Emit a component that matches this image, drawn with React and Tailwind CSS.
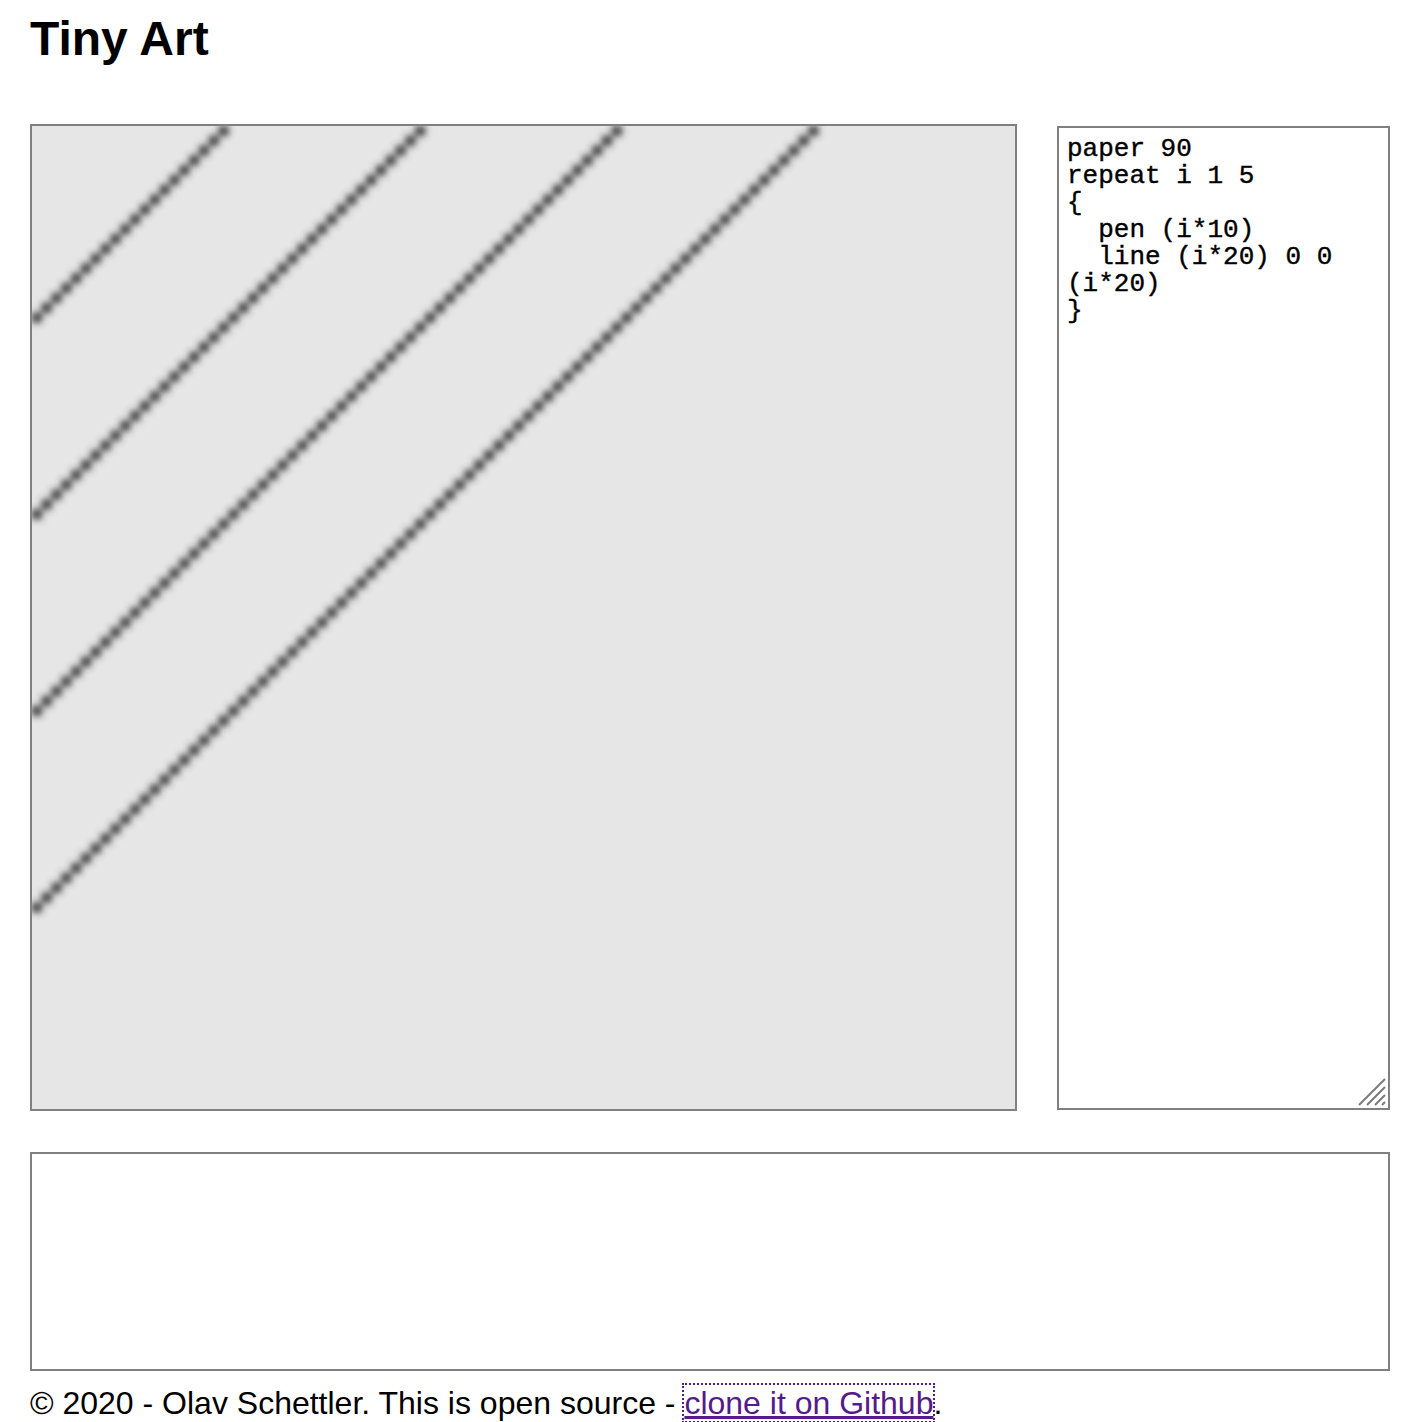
import React from "react";

function Art() {
  const lines = [1, 2, 3, 4];
  return (
    <svg viewBox="0 0 100 100" className="block w-full h-full" preserveAspectRatio="none">
      <defs>
        <filter id="blur" x="-10%" y="-10%" width="120%" height="120%">
          <feGaussianBlur stdDeviation="0.36" />
        </filter>
      </defs>
      <rect x="0" y="0" width="100" height="100" fill="#e6e6e6" />
      <g filter="url(#blur)" fill="#333333">
        {lines.map((i) => {
          const n = i * 20;
          const rects = [];
          for (let k = 0; k < n; k++) {
            rects.push(<rect key={k} x={k} y={n - 1 - k} width="1" height="1" />);
          }
          return <g key={i}>{rects}</g>;
        })}
      </g>
    </svg>
  );
}

export default function App() {
  const code = ["paper 90", "repeat i 1 5", "{", "  pen (i*10)", "  line (i*20) 0 0 ", "(i*20)", "}"];
  return (
    <div className="bg-white text-black pl-[30px] pr-[32px]" style={{ fontFamily: '"Liberation Sans", Arial, sans-serif' }}>
      <h1 className="text-[48px] font-bold leading-[55px] pt-[11px] m-0">Tiny Art</h1>
      <div className="flex items-start gap-[40px] mt-[58px]">
        <div className="w-[987px] h-[987px] border-2 border-[#808080] bg-[#e6e6e6] shrink-0">
          <Art />
        </div>
        <div className="relative mt-[2px] w-[333px] h-[984px] border-2 border-[#808080] bg-white pl-[8px] pt-[8px]">
          <div
            className="whitespace-pre text-[26px] leading-[27px] text-black [-webkit-text-stroke:0.4px_black]"
            style={{ fontFamily: '"Liberation Mono", "Courier New", monospace' }}
          >
            {code.join("\n")}
          </div>
          <svg className="absolute right-[2px] bottom-[2px]" width="28" height="28" viewBox="0 0 28 28">
            <g stroke="#7a7a7a" strokeWidth="2" strokeLinecap="butt">
              <line x1="1" y1="27" x2="27" y2="1" />
              <line x1="9" y1="27" x2="27" y2="9" />
              <line x1="17" y1="27" x2="27" y2="17" />
              <line x1="24" y1="27" x2="27" y2="24" />
            </g>
          </svg>
        </div>
      </div>
      <div className="mt-[41px] h-[219px] border-2 border-[#808080] bg-white" />
      <p className="text-[32px] leading-[37px] mt-[14px] m-0">
        © 2020 - Olav Schettler. This is open source -{" "}
        <a href="#" className="text-[#551a8b] underline outline-2 outline-dotted outline-[#551a8b]">
          clone it on Github
        </a>
        .
      </p>
    </div>
  );
}
